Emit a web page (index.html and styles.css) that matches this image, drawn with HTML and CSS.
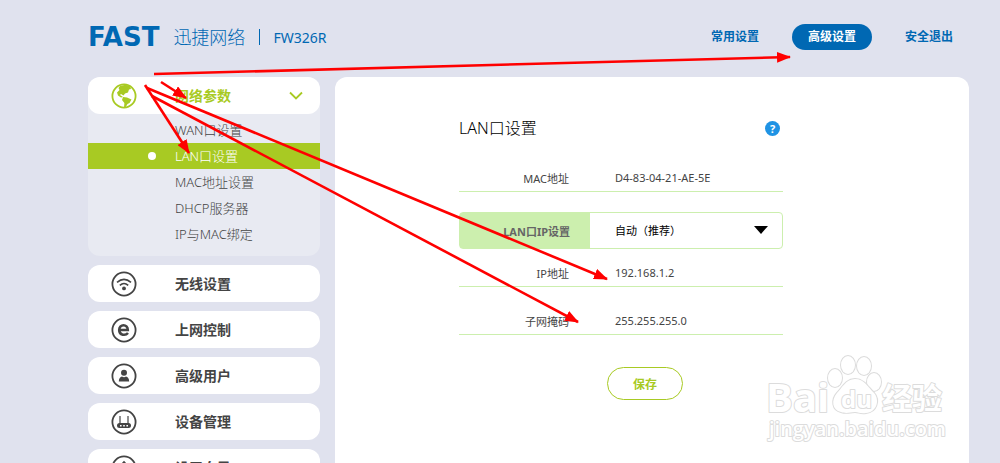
FILE: index.html
```html
<!DOCTYPE html>
<html lang="zh-CN">
<head>
    <meta charset="UTF-8">
    <meta name="viewport" content="width=device-width, initial-scale=1.0">
    <title>FW326R</title>
    <link rel="stylesheet" href="styles.css">
</head>
<body>
    <header class="header">
        <div class="brand">
            <span class="brand-mark">FAST</span>
            <span class="brand-name">迅捷网络</span>
            <span class="brand-model">FW326R</span>
        </div>
        <nav class="top-nav">
            <a href="#">常用设置</a>
            <a href="#" class="active">高级设置</a>
            <a href="#">安全退出</a>
        </nav>
    </header>

    <div class="layout">
        <nav class="sidebar">
            <div class="menu-group">
                <a href="#" class="menu-item open">
                    <svg class="menu-icon" viewBox="0 0 26 26">
                        <circle cx="13" cy="13" r="11.6" fill="none" stroke="currentColor" stroke-width="1.8"/>
                        <path d="M9 3 L14.5 1.8 L19 3 L20 6 L18 6.5 L17 9.5 L14 10.5 L12.5 12.5 L10 11 L9 12 L12 14 L10 14.5 L7 12.5 L6 9.5 L8.5 7 L7.5 5 Z" fill="currentColor"/>
                        <path d="M12 14 L16 14.5 L20.5 16.5 L18.5 20 L16.5 21 L14.5 24.5 L13 24.5 L13.4 20 L11 17 Z" fill="currentColor"/>
                    </svg>
                    <span>网络参数</span>
                    <svg class="chevron" viewBox="0 0 14 9">
                        <path d="M1 1.5 L7 7.5 L13 1.5" fill="none" stroke="currentColor" stroke-width="1.8"/>
                    </svg>
                </a>
                <ul class="submenu">
                    <li><a href="#">WAN口设置</a></li>
                    <li><a href="#" class="active">LAN口设置</a></li>
                    <li><a href="#">MAC地址设置</a></li>
                    <li><a href="#">DHCP服务器</a></li>
                    <li><a href="#">IP与MAC绑定</a></li>
                </ul>
            </div>

            <a href="#" class="menu-item">
                <svg class="menu-icon" viewBox="0 0 26 26" fill="none" stroke="currentColor">
                    <circle cx="13" cy="13" r="11.6" stroke-width="1.8"/>
                    <path d="M6 11.4 Q13 5.4 20 11.4 M8.8 14.4 Q13 10.6 17.2 14.4" stroke-width="1.6"/>
                    <circle cx="13" cy="17.4" r="1.9" fill="currentColor" stroke="none"/>
                </svg>
                <span>无线设置</span>
            </a>
            <a href="#" class="menu-item">
                <svg class="menu-icon" viewBox="0 0 26 26" fill="none" stroke="currentColor">
                    <circle cx="13" cy="13" r="11.6" stroke-width="1.8"/>
                    <path d="M8.6 13 H16.8 C16.8 6.6 8.2 6.6 8.2 13 C8.2 18.6 14.6 18.8 17 16" stroke-width="2.6"/>
                </svg>
                <span>上网控制</span>
            </a>
            <a href="#" class="menu-item">
                <svg class="menu-icon" viewBox="0 0 26 26">
                    <circle cx="13" cy="13" r="11.6" fill="none" stroke="currentColor" stroke-width="1.8"/>
                    <circle cx="13" cy="9.8" r="3" fill="currentColor"/>
                    <path d="M7.8 18.6 C7.8 15.4 9.3 13.7 11 13.5 Q13 14.8 15 13.5 C16.7 13.7 18.2 15.4 18.2 18.6 Z" fill="currentColor"/>
                </svg>
                <span>高级用户</span>
            </a>
            <a href="#" class="menu-item">
                <svg class="menu-icon" viewBox="0 0 26 26">
                    <circle cx="13" cy="13" r="11.6" fill="none" stroke="currentColor" stroke-width="1.8"/>
                    <path d="M9 7 V15 M17 7 V15" stroke="currentColor" stroke-width="1.2"/>
                    <rect x="6" y="14" width="14" height="5" rx="2.5" fill="currentColor"/>
                    <path d="M9 16 h1.6 v1.4 h-1.6 z M12.2 16 h1.6 v1.4 h-1.6 z M15.4 16 h1.6 v1.4 h-1.6 z" fill="#fff"/>
                </svg>
                <span>设备管理</span>
            </a>
            <a href="#" class="menu-item">
                <svg class="menu-icon" viewBox="0 0 26 26" fill="none" stroke="currentColor">
                    <circle cx="13" cy="13" r="11.6" stroke-width="1.8"/>
                    <path d="M13 18 V8 M9.5 11 L13 7 L16.5 11" stroke-width="1.8"/>
                </svg>
                <span>设置向导</span>
            </a>
        </nav>

        <main class="panel">
            <form class="lan-form">
                <div class="form-title">
                    <h1>LAN口设置</h1>
                    <button type="button" class="help" aria-label="帮助">?</button>
                </div>
                <div class="form-row first">
                    <span class="form-label">MAC地址</span>
                    <span class="form-value">D4-83-04-21-AE-5E</span>
                </div>
                <div class="select-row">
                    <label class="form-label" for="mode">LAN口IP设置</label>
                    <div class="select-wrap">
                        <select id="mode">
                            <option>自动（推荐）</option>
                            <option>手动</option>
                        </select>
                        <svg class="caret" viewBox="0 0 14 8"><path d="M0 0 H14 L7 8 Z"/></svg>
                    </div>
                </div>
                <div class="form-row">
                    <label class="form-label" for="ip">IP地址</label>
                    <input class="form-value" type="text" id="ip" value="192.168.1.2">
                </div>
                <div class="form-row last">
                    <label class="form-label" for="mask">子网掩码</label>
                    <input class="form-value" type="text" id="mask" value="255.255.255.0">
                </div>
                <button type="submit" class="save">保存</button>
            </form>
        </main>
    </div>

    <!-- Baidu Jingyan watermark -->
    <svg class="watermark" viewBox="0 0 190 95">
        <ellipse cx="70" cy="25" rx="7" ry="9"/>
        <ellipse cx="83" cy="12" rx="7" ry="9"/>
        <ellipse cx="99" cy="13" rx="7" ry="9"/>
        <ellipse cx="109" cy="29" rx="7" ry="9"/>
        <path d="M90 26 C99 26 103 34 109 40 C115 47 112 59 101 60 C95 61 94 59 90 59 C85 59 82 61 76 59 C67 57 66 47 72 40 C77 35 81 26 90 26 Z"/>
        <text class="wm-big" x="1" y="59">Bai</text>
        <text class="wm-du" x="76" y="55">du</text>
        <text class="wm-cn" x="117" y="56">经验</text>
        <text class="wm-url" x="4" y="83">jingyan.baidu.com</text>
    </svg>

    <!-- red guide arrows -->
    <svg class="arrows" viewBox="0 0 1000 463">
        <defs>
            <marker id="head" markerUnits="userSpaceOnUse" markerWidth="14" markerHeight="11" refX="13" refY="5.5" orient="auto">
                <path d="M0 0 L14 5.5 L0 11 Z" fill="#f00"/>
            </marker>
        </defs>
        <g stroke="#f00" stroke-width="2.6">
            <line x1="154" y1="74" x2="790" y2="57" marker-end="url(#head)"/>
            <line x1="161" y1="82" x2="186" y2="98" marker-end="url(#head)"/>
            <line x1="145" y1="85" x2="189" y2="153" marker-end="url(#head)"/>
            <line x1="147" y1="88" x2="607" y2="279" marker-end="url(#head)"/>
            <line x1="152" y1="96" x2="578" y2="322" marker-end="url(#head)"/>
        </g>
    </svg>
</body>
</html>
```
FILE: styles.css
```css
* {
    margin: 0;
    padding: 0;
    box-sizing: border-box;
}

body {
    position: relative;
    height: 100vh;
    overflow: hidden;
    padding: 0 31px 0 88px;
    background: #e0e2ee;
    font-family: "Noto Sans", "Noto Sans CJK SC", sans-serif;
    color: #444;
}

a {
    color: inherit;
    text-decoration: none;
}

input, select, button {
    font-family: inherit;
    background: none;
    border: none;
    outline: none;
}

/* header */
.header {
    display: flex;
    justify-content: space-between;
    align-items: center;
    height: 77px;
    padding-bottom: 3px;
    color: #0068b3;
}

.brand {
    display: flex;
    align-items: center;
}

.brand-mark {
    font: bold 26px/26px "DejaVu Sans", sans-serif;
}

.brand-name {
    margin-left: 14px;
    padding-right: 14px;
    font-size: 18px;
    font-weight: 300;
    line-height: 16px;
    border-right: 1px solid #0068b3;
}

.brand-model {
    margin-left: 13px;
    font-size: 14px;
}

.top-nav {
    display: flex;
    gap: 17px;
}

.top-nav a {
    padding: 0 16px;
    border-radius: 13px;
    font-size: 12px;
    font-weight: bold;
    line-height: 26px;
}

.top-nav .active {
    background: #0068b3;
    color: #fff;
}

.layout {
    display: flex;
    gap: 15px;
}

/* sidebar */
.sidebar {
    display: flex;
    flex-direction: column;
    gap: 9px;
    width: 232px;
}

.menu-group {
    border-radius: 12px;
    background: #e8eaf2;
}

.menu-item {
    display: flex;
    align-items: center;
    height: 37px;
    padding: 0 17px 0 23px;
    border-radius: 12px;
    background: #fff;
    font-size: 14px;
    font-weight: bold;
    line-height: 18px;
}

.menu-item.open {
    color: #a8ca23;
}

.menu-icon {
    width: 26px;
    height: 26px;
    margin-right: 38px;
}

.chevron {
    width: 14px;
    height: 9px;
    margin-left: auto;
}

.submenu {
    list-style: none;
    padding: 3px 0 9px;
}

.submenu a {
    display: flex;
    align-items: center;
    height: 26px;
    padding-left: 87px;
    font-size: 13px;
    font-weight: 300;
    line-height: 16px;
}

.submenu .active {
    padding-left: 60px;
    background: #a8ca23;
    color: #fff;
}

.submenu .active::before {
    content: "";
    width: 8px;
    height: 8px;
    margin-right: 19px;
    border-radius: 50%;
    background: #fff;
}

/* content panel */
.panel {
    flex: 1;
    min-height: 420px;
    padding: 39px 124px;
    border-radius: 12px;
    background: #fff;
}

.lan-form {
    display: flex;
    flex-direction: column;
    max-width: 324px;
    font-size: 11px;
}

.form-title {
    display: flex;
    justify-content: space-between;
    align-items: center;
    height: 24px;
    padding-right: 3px;
}

.form-title h1 {
    font-size: 16px;
    font-weight: 300;
    line-height: 20px;
    color: #000;
}

.help {
    width: 15px;
    height: 15px;
    border-radius: 50%;
    background: #1f93e4;
    color: #fff;
    font-size: 11px;
    font-weight: bold;
    line-height: 15px;
}

.form-row {
    display: grid;
    grid-template-columns: 130px 1fr;
    align-items: center;
    height: 28px;
    margin-bottom: 20px;
    border-bottom: 1px solid #ccefae;
}

.form-row.first {
    margin-top: 24px;
}

.form-row.last {
    margin-bottom: 32px;
}

.form-label {
    padding-right: 20px;
    text-align: right;
}

.form-value {
    width: 100%;
    padding-left: 26px;
    font-size: 11px;
    color: #444;
}

.select-row {
    display: grid;
    grid-template-columns: 130px 1fr;
    align-items: center;
    height: 37px;
    margin-bottom: 10px;
    border: 1px solid #ccefae;
    border-radius: 4px;
    background: linear-gradient(to right, #ccefae 130px, #fff 130px);
}

.select-row .form-label {
    font-weight: bold;
    color: #666;
}

.select-wrap {
    position: relative;
}

.select-wrap select {
    width: 100%;
    height: 35px;
    padding-left: 25px;
    appearance: none;
    font-size: 11px;
    color: #000;
}

.caret {
    position: absolute;
    top: 13px;
    right: 14px;
    width: 14px;
    height: 8px;
    pointer-events: none;
}

.save {
    align-self: center;
    width: 76px;
    height: 33px;
    margin-left: 48px;
    border: 1px solid #a8ca23;
    border-radius: 17px;
    font-size: 12px;
    font-weight: bold;
    color: #a8ca23;
}

/* overlays */
.watermark {
    position: absolute;
    right: 45px;
    bottom: 15px;
    width: 190px;
    height: 95px;
    font-family: "Open Sans", "Noto Sans CJK SC", sans-serif;
    fill: #fff;
    stroke: #dcdcdc;
    stroke-width: 2;
    stroke-linejoin: round;
    paint-order: stroke;
    pointer-events: none;
}

.wm-big {
    font-size: 40px;
    font-weight: bold;
}

.wm-du {
    font-size: 24px;
    font-weight: bold;
}

.wm-cn {
    font-size: 30px;
    font-weight: bold;
}

.wm-url {
    font-size: 20px;
    font-weight: 600;
}

.arrows {
    position: absolute;
    top: 0;
    left: 0;
    width: 1000px;
    height: 463px;
    pointer-events: none;
}
```
